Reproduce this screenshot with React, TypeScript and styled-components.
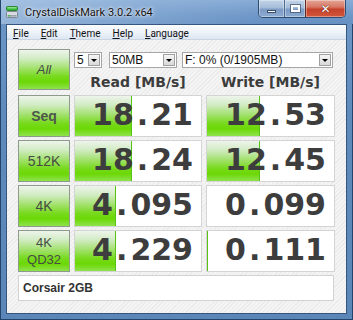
import { Fragment } from "react";
import styled, { createGlobalStyle } from "styled-components";

const GlobalStyle = createGlobalStyle`
  html, body { margin: 0; padding: 0; background: #ffffff; }
  * { box-sizing: border-box; }
`;

const UI = `Roboto, "Liberation Sans", sans-serif`;
const TAHOMA = `"Liberation Sans", Arial, sans-serif`;
const VERDANA = `"DejaVu Sans", Verdana, sans-serif`;

const GREEN = `linear-gradient(
  to bottom,
  #eef4ec 0%,
  #d2ecc4 22%,
  #a6e274 45%,
  #78da1e 68%,
  #6cd806 82%,
  #8ee24c 100%
)`;

const rows = [
  { label: ["Seq"], read: "18.21", write: "12.53", strong: true },
  { label: ["512K"], read: "18.24", write: "12.45" },
  { label: ["4K"], read: "4.095", write: "0.099" },
  { label: ["4K", "QD32"], read: "4.229", write: "0.111", small: true },
];

// CrystalDiskMark 3 draws the meter on a log scale: log10(MB/s * 10) / 5
const barWidth = (value: string, inner: number) => {
  const v = parseFloat(value);
  if (v <= 0) return 0;
  return Math.max(0, Math.min(1, Math.log10(v * 10) / 5)) * inner;
};

const Window = styled.div`
  width: 353px;
  height: 320px;
  display: flex;
  flex-direction: column;
  background: linear-gradient(to bottom, #6f98c6 0%, #5d89bb 40%, #5a86b8 100%);
  box-shadow: inset 1px 0 0 #23446c, inset -1px 0 0 #23446c, inset 0 -1px 0 #23446c;
`;

const TitleBar = styled.div`
  height: 24px;
  display: flex;
  align-items: center;
  padding-left: 6px;
  background: linear-gradient(to right, rgba(190, 212, 236, 0.55) 0%, rgba(160, 190, 224, 0.3) 45%, rgba(90, 130, 180, 0) 75%),
    linear-gradient(to bottom, #88acd6 0%, #6f98c8 60%, #6690c2 100%);
  box-shadow: inset 1px 0 0 #23446c;
`;

const AppIcon = styled.svg`
  width: 12px;
  height: 12px;
  flex: none;
`;

const Title = styled.span`
  margin-left: 7px;
  font-family: ${UI};
  font-size: 11px;
  color: #111;
  text-shadow: 0 0 5px rgba(255, 255, 255, 0.95), 0 0 2px rgba(255, 255, 255, 0.9);
`;

const Controls = styled.div`
  margin-left: auto;
  margin-right: 7px;
  align-self: flex-start;
  display: flex;
  height: 18px;
  border: 1px solid #2f4c72;
  border-top: none;
  border-radius: 0 0 5px 5px;
  overflow: hidden;
`;

const CtrlButton = styled.div<{ $w: number; $close?: boolean }>`
  width: ${(p) => p.$w}px;
  height: 100%;
  display: flex;
  align-items: center;
  justify-content: center;
  border-left: ${(p) => (p.$close ? "1px solid #5e2a24" : "1px solid #4a6a92")};
  &:first-child { border-left: none; }
  background: ${(p) =>
    p.$close
      ? "linear-gradient(to bottom, #e4a496 0%, #d77a66 40%, #c5412a 55%, #d2583c 100%)"
      : "linear-gradient(to bottom, #c3d4e8 0%, #a5bcd9 45%, #7c9cc6 55%, #8eabd0 100%)"};
  box-shadow: inset 0 0 0 1px rgba(255, 255, 255, 0.35);
`;

const MinGlyph = styled.span`
  width: 9px;
  height: 3px;
  margin-top: 5px;
  background: #fff;
  border: 1px solid #3b4f6c;
`;

const MaxGlyph = styled.span`
  width: 9px;
  height: 7px;
  border: 2px solid #fff;
  outline: 1px solid rgba(59, 79, 108, 0.7);
`;

const CloseGlyph = styled.span`
  font-family: ${VERDANA};
  font-weight: bold;
  font-size: 12px;
  line-height: 1;
  color: #fff;
  text-shadow: 0 0 1px #5a1a10, 0 0 1px #5a1a10;
`;

const Body = styled.div`
  flex: 1;
  margin: 0 6px 6px;
  border: 1px solid #35577f;
  display: flex;
  flex-direction: column;
  min-height: 0;
`;

const MenuBar = styled.div`
  height: 15px;
  display: flex;
  align-items: center;
  padding-top: 2px;
  background: linear-gradient(to bottom, #fbfcfe 0%, #eef3f9 50%, #dce6f2 100%);
  border-bottom: 1px solid #c9d5e3;
`;

const MenuItem = styled.span`
  padding: 0 6px;
  font-family: ${UI};
  font-size: 10px;
  color: #111;
  & u { text-decoration-thickness: 1px; text-underline-offset: 1px; }
`;

const Client = styled.div`
  flex: 1;
  padding: 9px 10px 0 11px;
  background-color: #f1f1f1;
  background-image: repeating-linear-gradient(-45deg, #f4f4f4 0 2px, #ebebeb 2px 3px);
`;

const Grid = styled.div`
  display: grid;
  grid-template-columns: 52px 128px 129px;
  grid-template-rows: 43px 42px 42px 42px 42px 26px;
  column-gap: 4px;
  row-gap: 3px;
`;

const TestButton = styled.div<{ $strong?: boolean; $italic?: boolean; $small?: boolean }>`
  height: ${(p) => (p.$italic ? "41px" : "42px")};
  border: 1px solid #8e9a8c;
  background: ${GREEN};
  display: flex;
  flex-direction: column;
  align-items: center;
  justify-content: center;
  font-family: ${TAHOMA};
  font-size: ${(p) => (p.$small ? "13px" : p.$italic ? "13px" : "14px")};
  line-height: ${(p) => (p.$small ? "17px" : "16px")};
  font-weight: ${(p) => (p.$strong ? "bold" : "normal")};
  font-style: ${(p) => (p.$italic ? "italic" : "normal")};
  color: ${(p) => (p.$strong ? "#4e564c" : "#464c44")};
`;

const HeaderArea = styled.div`
  grid-column: 2 / 4;
  display: flex;
  flex-direction: column;
  padding-top: 3px;
`;

const Selects = styled.div`
  display: flex;
  gap: 7px;
  & > :last-child { margin-left: -2px; }
`;

const Select = styled.div<{ $w: number }>`
  width: ${(p) => p.$w}px;
  height: 16px;
  border: 1px solid #a6a6a6;
  background: #fff;
  display: flex;
  align-items: center;
  padding-left: 2px;
  font-family: ${TAHOMA};
  font-size: 12px;
  color: #111;
`;

const SelectArrow = styled.span`
  margin-left: auto;
  margin-right: 1px;
  width: 12px;
  height: 12px;
  border: 1px solid #a0a0a0;
  background: linear-gradient(to bottom, #f6f6f6, #d8d8d8);
  display: flex;
  align-items: center;
  justify-content: center;
  &::after {
    content: "";
    border-left: 3px solid transparent;
    border-right: 3px solid transparent;
    border-top: 3px solid #000;
  }
`;

const Headers = styled.div`
  margin-top: 6px;
  display: grid;
  grid-template-columns: 128px 129px;
  column-gap: 4px;
`;

const Header = styled.div`
  text-align: center;
  font-family: ${VERDANA};
  font-weight: bold;
  font-size: 14px;
  line-height: 16px;
  color: #3c3c3c;
`;

const Cell = styled.div`
  position: relative;
  height: 42px;
  border: 1px solid #d4d4d4;
  background: #fff;
  display: flex;
  align-items: center;
  justify-content: flex-end;
  padding: 0 8px 3px 0;
  overflow: hidden;
`;

const Bar = styled.div`
  position: absolute;
  left: 0;
  top: 0;
  bottom: 0;
  background: ${GREEN};
  border-right: 1px solid #56c414;
`;

const Value = styled.span`
  position: relative;
  font-family: ${VERDANA};
  font-weight: bold;
  font-size: 30px;
  line-height: 1;
  color: #3d3d3d;
`;

const Dot = styled.span`
  margin: 0 3px;
`;

const Comment = styled.div`
  grid-column: 1 / 4;
  margin-right: 1px;
  border: 1px solid #d2d2d2;
  background: #fff;
  display: flex;
  align-items: center;
  padding-left: 4px;
  font-family: ${TAHOMA};
  font-weight: bold;
  font-size: 12px;
  color: #333;
`;

const Score = ({ value, inner }: { value: string; inner: number }) => {
  const [a, b] = value.split(".");
  const w = barWidth(value, inner);
  return (
    <Cell>
      {w > 0 && <Bar style={{ width: Math.round(w) }} />}
      <Value>
        {a}
        <Dot>.</Dot>
        {b}
      </Value>
    </Cell>
  );
};

const menus = [
  ["F", "ile"],
  ["E", "dit"],
  ["T", "heme"],
  ["H", "elp"],
  ["L", "anguage"],
];

export default function App() {
  return (
    <>
      <GlobalStyle />
      <Window>
        <TitleBar>
          <AppIcon viewBox="0 0 12 12">
            <rect x="0.5" y="0.5" width="11" height="4" rx="1" fill="#37b83a" stroke="#1f7a22" strokeWidth="0.8" />
            <rect x="1.5" y="1.2" width="9" height="1.2" fill="#9be89a" />
            <rect x="0.5" y="5.5" width="11" height="6" rx="1" fill="#d9dde2" stroke="#6d7680" strokeWidth="0.8" />
            <rect x="1.5" y="9" width="9" height="1.6" fill="#9aa3ad" />
            <rect x="2" y="9.2" width="2" height="1.2" fill="#39c43c" />
          </AppIcon>
          <Title>CrystalDiskMark 3.0.2 x64</Title>
          <Controls>
            <CtrlButton $w={25}>
              <MinGlyph />
            </CtrlButton>
            <CtrlButton $w={21}>
              <MaxGlyph />
            </CtrlButton>
            <CtrlButton $w={40} $close>
              <CloseGlyph>✕</CloseGlyph>
            </CtrlButton>
          </Controls>
        </TitleBar>
        <Body>
          <MenuBar>
            {menus.map(([k, rest]) => (
              <MenuItem key={k}>
                <u>{k}</u>
                {rest}
              </MenuItem>
            ))}
          </MenuBar>
          <Client>
            <Grid>
              <TestButton $italic>All</TestButton>
              <HeaderArea>
                <Selects>
                  <Select $w={28}>
                    5<SelectArrow />
                  </Select>
                  <Select $w={68}>
                    50MB<SelectArrow />
                  </Select>
                  <Select $w={151}>
                    F: 0% (0/1905MB)<SelectArrow />
                  </Select>
                </Selects>
                <Headers>
                  <Header>Read [MB/s]</Header>
                  <Header>Write [MB/s]</Header>
                </Headers>
              </HeaderArea>
              {rows.map((r) => (
                <Fragment key={r.label.join()}>
                  <TestButton $strong={r.strong} $small={r.small}>
                    {r.label.map((l) => (
                      <span key={l}>{l}</span>
                    ))}
                  </TestButton>
                  <Score value={r.read} inner={126} />
                  <Score value={r.write} inner={127} />
                </Fragment>
              ))}
              <Comment>Corsair 2GB</Comment>
            </Grid>
          </Client>
        </Body>
      </Window>
    </>
  );
}
